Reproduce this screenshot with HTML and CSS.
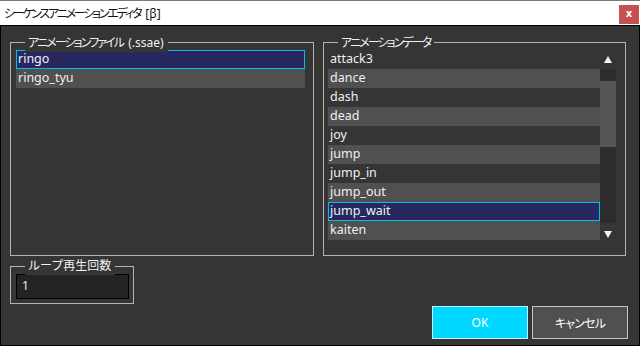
FILE: index.html
```html
<!DOCTYPE html>
<html lang="ja">
<head>
<meta charset="utf-8">
<link rel="stylesheet" href="styles.css">
</head>
<body>
<div class="window">
  <div class="titlebar">
    <span class="title"><span class="kana kana-title gap">シーケンスアニメーションエディタ</span> [β]</span>
    <span class="close">x</span>
  </div>
  <div class="client">
    <div class="top">
      <div class="group group-files">
        <span class="legend"><span class="kana gap">アニメーションファイル</span> (.ssae)</span>
        <div class="list">
          <div class="row selected">ringo</div>
          <div class="row light">ringo_tyu</div>
        </div>
      </div>
      <div class="group group-anims">
        <span class="legend"><span class="kana">アニメーションデータ</span></span>
        <div class="list-wrap">
          <div class="list anims">
            <div class="row">attack3</div>
            <div class="row light">dance</div>
            <div class="row">dash</div>
            <div class="row light">dead</div>
            <div class="row">joy</div>
            <div class="row light">jump</div>
            <div class="row">jump_in</div>
            <div class="row light">jump_out</div>
            <div class="row selected">jump_wait</div>
            <div class="row light">kaiten</div>
          </div>
          <div class="scrollbar">
            <div class="arrow"><span class="tri up"></span></div>
            <div class="track"><div class="thumb"></div></div>
            <div class="arrow"><span class="tri down"></span></div>
          </div>
        </div>
      </div>
    </div>
    <div class="group group-loop">
      <span class="legend">ループ再生回数</span>
      <div class="input">1</div>
    </div>
    <div class="buttons">
      <div class="btn ok">OK</div>
      <div class="btn cancel"><span class="kana-btn">キャンセル</span></div>
    </div>
  </div>
</div>
</body>
</html>
```

FILE: styles.css
```css
* { box-sizing: border-box; }
html, body { margin: 0; padding: 0; }
body {
  width: 640px;
  height: 346px;
  overflow: hidden;
  font-family: "Noto Sans", "Noto Sans CJK JP", sans-serif;
  font-size: 12px;
}
.window {
  width: 640px;
  height: 346px;
  display: flex;
  flex-direction: column;
  background: #000;
}
.titlebar {
  height: 26px;
  background: #fff;
  border-top: 1px solid #7a7a7a;
  border-bottom: 1px solid #000;
  display: flex;
  align-items: center;
  justify-content: space-between;
  padding: 0 1px 0 4px;
}
.title {
  color: #111;
  font-size: 12px;
  line-height: 16px;
  margin-top: 1px;
  white-space: nowrap;
}
.kana {
  font-family: "Noto Sans CJK JP", sans-serif;
  font-feature-settings: "palt";
  letter-spacing: -1.9px;
}
.kana.kana-title {
  letter-spacing: -2.2px;
}
.kana.gap {
  margin-right: 2px;
}
.kana-btn {
  font-family: "Noto Sans CJK JP", sans-serif;
  font-feature-settings: "palt";
  letter-spacing: -0.8px;
}
.close {
  width: 20px;
  height: 19px;
  background: #c75050;
  color: #fff;
  font-family: "DejaVu Sans", sans-serif;
  font-weight: bold;
  font-size: 10px;
  line-height: 17px;
  text-align: center;
  margin-top: 2px;
}
.client {
  flex: 1;
  background: #353535;
  margin: 0 1px 1px 1px;
  padding: 16px 11px 0 9px;
  display: flex;
  flex-direction: column;
  color: #eaeaea;
}
.top {
  display: flex;
  gap: 9px;
  height: 214px;
}
.group {
  border: 1px solid #b4b4b4;
  position: relative;
}
.legend {
  position: absolute;
  top: -10px;
  left: 14px;
  padding: 0 4px 0 3px;
  background: #353535;
  line-height: 18px;
  color: #eef2f6;
  white-space: nowrap;
}
.group-files {
  width: 304px;
  padding: 7px 8px 0 5px;
}
.group-anims {
  width: 303px;
  padding: 7px 8px 0 4px;
}
.list {
  display: flex;
  flex-direction: column;
}
.row {
  height: 19px;
  line-height: 18px;
  padding-left: 2px;
  white-space: nowrap;
  color: #eef0f2;
  font-size: 12.5px;
}
.row.light { background: #505050; }
.row.selected {
  background: #282860;
  border: 1px solid #00c0e6;
  padding-left: 1px;
  line-height: 16px;
}
.list-wrap {
  display: flex;
}
.anims { width: 272px; }
.scrollbar {
  width: 16px;
  height: 190px;
  display: flex;
  flex-direction: column;
}
.arrow {
  height: 19px;
  display: flex;
  align-items: center;
  justify-content: center;
}
.arrow:last-child { height: 17px; }
.track {
  flex: 1;
  background: #2c2c2c;
  padding-top: 12px;
}
.thumb {
  height: 66px;
  background: #565656;
}
.tri {
  width: 0;
  height: 0;
  border-left: 4px solid transparent;
  border-right: 4px solid transparent;
}
.tri.up { border-bottom: 7px solid #f4f4f4; }
.tri.down { border-top: 7px solid #f4f4f4; margin-top: 6px; }
.group-loop {
  margin-top: 10px;
  width: 124px;
  height: 38px;
  padding: 7px 0 0 5px;
}
.input {
  width: 113px;
  height: 25px;
  background: #232323;
  border: 1px solid #000;
  line-height: 22px;
  padding-left: 5px;
  color: #f0f0f0;
}
.buttons {
  margin-top: 2px;
  display: flex;
  justify-content: flex-end;
  gap: 4px;
}
.btn {
  width: 96px;
  height: 33px;
  display: flex;
  align-items: center;
  justify-content: center;
  color: #fff;
}
.ok {
  background: #00d8ff;
  border: 1px solid #c8f4ff;
}
.cancel {
  background: #505050;
  border: 1px solid #c4c4c4;
}
```
